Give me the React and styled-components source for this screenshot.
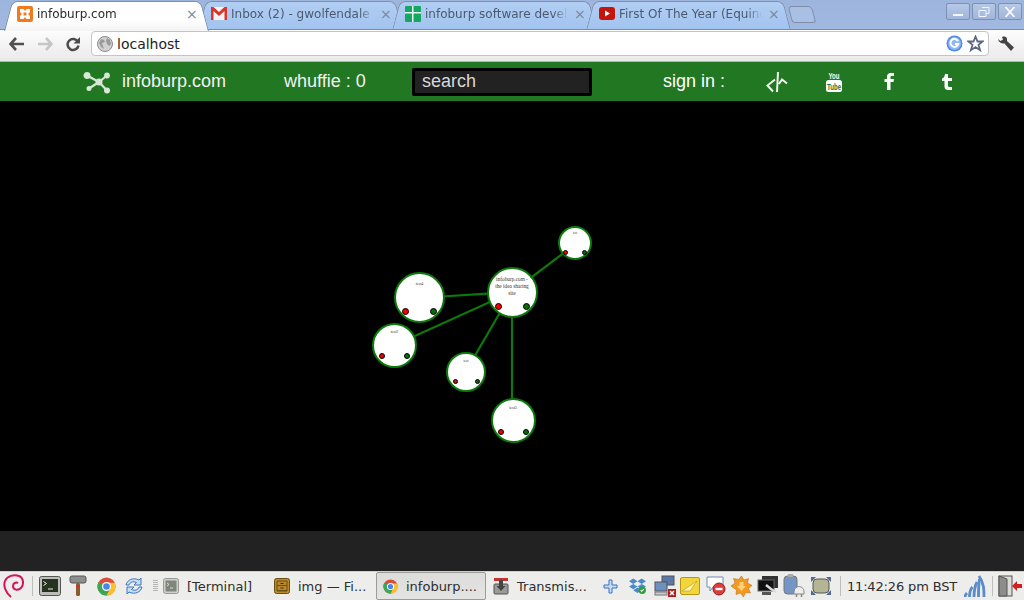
import React from 'react';
import styled, { createGlobalStyle } from 'styled-components';

const GlobalStyle = createGlobalStyle`
  html, body {
    margin: 0;
    padding: 0;
    background: #000;
  }
  body {
    width: 1024px;
    height: 600px;
    overflow: hidden;
    font-family: "DejaVu Sans", sans-serif;
  }
`;

const nodes = [
  { id: 'main', x: 512, y: 191, r: 25.5, size: 5.3, top: 7, dx: 14, dy: 14, dot: 3.5, lines: ['infoburp.com -', 'the idea sharing', 'site'] },
  { id: 'n1', x: 575, y: 142, r: 17, size: 3, top: 2, dx: 9.5, dy: 9, dot: 2.5, lines: ['test'] },
  { id: 'n2', x: 419.5, y: 196.5, r: 25.5, size: 4, top: 6, dx: 14, dy: 14, dot: 3.5, lines: ['test4'] },
  { id: 'n3', x: 394.5, y: 244, r: 22.5, size: 4, top: 3, dx: 12.5, dy: 11, dot: 3, lines: ['test2'] },
  { id: 'n4', x: 466, y: 270.5, r: 20, size: 3.5, top: 4, dx: 11, dy: 10, dot: 2.5, lines: ['test'] },
  { id: 'n5', x: 513, y: 319, r: 22.5, size: 4, top: 4, dx: 12.5, dy: 11.5, dot: 3, lines: ['test3'] },
];

const edges = [
  [512, 191, 565, 151],
  [512, 191, 419, 197],
  [512, 191, 395, 244],
  [512, 191, 466, 270],
  [512, 191, 512, 319],
];

const Screen = styled.div`
  width: 1024px;
  height: 600px;
  display: flex;
  flex-direction: column;
  overflow: hidden;
`;

const TabStrip = styled.div`
  height: 30px;
  box-sizing: border-box;
  padding: 1px 2px 0 8px;
  display: flex;
  align-items: stretch;
  background: linear-gradient(#9db5dd, #a1b8e0);
  border-bottom: 1px solid #7c8aa4;
`;

const Tab = styled.div`
  position: relative;
  flex: none;
  width: 197px;
  margin-left: ${(p) => (p.$first ? '0' : '-3px')};
  height: ${(p) => (p.$active ? '30px' : '28px')};
  z-index: ${(p) => (p.$active ? 2 : 1)};
  display: flex;
  align-items: center;
  padding: 0 9px ${(p) => (p.$active ? '5px' : '3px')} 9px;
  box-sizing: border-box;
  font-size: 12px;
  color: ${(p) => (p.$active ? '#2a2a2a' : '#4b5a70')};

  &::before,
  &::after {
    content: '';
    position: absolute;
    top: 0;
    bottom: 0;
    width: 55%;
    border: 1px solid #7f8fa9;
    border-bottom: 0;
    background: ${(p) => (p.$active ? 'linear-gradient(#ffffff 60%, #f4f4f4)' : 'linear-gradient(#b1cdf2, #a3c4f0)')};
    z-index: -1;
  }
  &::before {
    left: 0;
    border-right: 0;
    border-radius: 6px 0 0 0;
    transform: skewX(-15deg);
  }
  &::after {
    right: 0;
    border-left: 0;
    border-radius: 0 6px 0 0;
    transform: skewX(15deg);
  }
`;

const TabTitle = styled.span`
  flex: 1;
  min-width: 0;
  margin-left: 4px;
  white-space: nowrap;
  overflow: hidden;
  mask-image: linear-gradient(to right, #000 90%, transparent);
`;

const TabClose = styled.span`
  flex: none;
  margin-left: 6px;
  width: 10px;
  font-size: 14px;
  line-height: 14px;
  text-align: center;
  color: #7d8794;
`;

const NewTab = styled.div`
  flex: none;
  width: 22px;
  height: 15px;
  margin: 5px 0 0 3px;
  background: #a9c0e4;
  border: 1px solid #7f8fa9;
  border-radius: 4px 4px 3px 3px;
  transform: skewX(15deg);
`;

const WindowControls = styled.div`
  margin-left: auto;
  display: flex;
  gap: 2px;
  height: 17px;
  margin-top: 2px;
`;

const WindowButton = styled.div`
  width: 24px;
  height: 17px;
  box-sizing: border-box;
  border: 1px solid #7b90b4;
  border-radius: 2px;
  background: linear-gradient(#b6c8e6, #a0b5d9);
  display: flex;
  align-items: center;
  justify-content: center;
`;

const Toolbar = styled.div`
  height: 32px;
  box-sizing: border-box;
  padding-top: 1px;
  display: flex;
  align-items: flex-start;
  background: linear-gradient(#fdfdfd, #e9e9e9);
  border-bottom: 1px solid #b5b5b5;
`;

const NavButton = styled.div`
  width: 28px;
  height: 26px;
  display: flex;
  align-items: center;
  justify-content: center;
  flex: none;
  margin-left: ${(p) => p.$left || 0}px;
`;

const Omnibox = styled.div`
  width: 898px;
  height: 25px;
  margin-left: 4px;
  box-sizing: border-box;
  background: #fff;
  border: 1px solid #c4c4c4;
  border-radius: 4px;
  display: flex;
  align-items: center;
  padding: 0 4px 0 5px;
  gap: 4px;
  font-size: 14px;
  color: #1e1e1e;
`;

const Address = styled.span`
  flex: 1;
`;

const NavBar = styled.nav`
  height: 39px;
  display: grid;
  grid-template-columns: 122px 162px 128px 251px 103px 59px 58px 57px 1fr;
  align-items: center;
  background: #227722;
  font-family: "Liberation Sans", Arial, sans-serif;
  font-size: 18px;
  color: #f2f2f2;
`;

const Brand = styled.div`
  display: flex;
  justify-content: flex-end;
  padding-right: 11px;
`;

const SearchBox = styled.div`
  width: 180px;
  height: 28px;
  box-sizing: border-box;
  background: #222;
  border: 3px solid #000;
  border-radius: 2px;
  padding-left: 7px;
  line-height: 21px;
  color: #d8d8d8;
`;

const SignIn = styled.span`
  color: #fff;
`;

const Social = styled.div`
  display: flex;
  justify-content: flex-start;
`;

const Stage = styled.main`
  position: relative;
  height: 430px;
  background: #000;
`;

const Wires = styled.svg`
  position: absolute;
  inset: 0;
`;

const Node = styled.div`
  position: absolute;
  left: ${(p) => p.$x - p.$r}px;
  top: ${(p) => p.$y - p.$r}px;
  width: ${(p) => p.$r * 2}px;
  height: ${(p) => p.$r * 2}px;
  box-sizing: border-box;
  border: 2.5px solid #0b7a0b;
  border-radius: 50%;
  background: #fff;
  padding-top: ${(p) => p.$top}px;
  text-align: center;
  font-family: "Liberation Serif", serif;
  font-size: ${(p) => p.$size}px;
  line-height: 7px;
  color: #333;
`;

const Socket = styled.span`
  position: absolute;
  left: calc(50% + ${(p) => p.$dx}px);
  top: calc(50% + ${(p) => p.$dy}px);
  width: ${(p) => p.$d * 2}px;
  height: ${(p) => p.$d * 2}px;
  margin: ${(p) => -p.$d}px 0 0 ${(p) => -p.$d}px;
  box-sizing: border-box;
  border: 1px solid #000;
  border-radius: 50%;
  background: ${(p) => p.$color};
`;

const Footer = styled.div`
  height: 40px;
  background: #222;
`;

const Taskbar = styled.footer`
  height: 29px;
  box-sizing: border-box;
  display: flex;
  align-items: center;
  background: #ededeb;
  border-top: 1px solid #cfcfcd;
  font-size: 13px;
  color: #2e2e2e;
`;

const Slot = styled.div`
  flex: none;
  width: ${(p) => p.$w}px;
  display: flex;
  align-items: center;
  justify-content: center;
`;

const Divider = styled.div`
  flex: none;
  width: 1px;
  height: 20px;
  background: #bdbdbb;
  margin: 0 ${(p) => p.$gap || 0}px;
`;

const Grip = styled.div`
  flex: none;
  width: 5px;
  height: 12px;
  margin: 0 5px 0 3px;
  background: repeating-linear-gradient(#b5b5b3 0 1px, transparent 1px 2px);
`;

const Task = styled.div`
  flex: none;
  box-sizing: border-box;
  width: ${(p) => p.$w}px;
  height: 28px;
  display: flex;
  align-items: center;
  gap: 8px;
  padding-left: ${(p) => p.$pad}px;
  white-space: nowrap;
  ${(p) => p.$active && `
    background: linear-gradient(#dcdcda, #e4e4e2);
    border: 1px solid #9b9b99;
    border-radius: 2px;
  `}
`;

const Clock = styled.div`
  flex: none;
  width: 112px;
  text-align: center;
  white-space: nowrap;
  letter-spacing: -0.15px;
`;

const LogoIcon = () => (
  <svg width="28" height="24" viewBox="0 0 28 24">
    <g stroke="#d8e8d6" strokeWidth="2.2" fill="#d8e8d6">
      <line x1="4" y1="5.5" x2="16" y2="12" />
      <line x1="24" y1="5.5" x2="16" y2="12" />
      <line x1="6" y1="18.500" x2="16" y2="12" />
      <line x1="24" y1="20.500" x2="16" y2="12" />
      <circle cx="4" cy="5.500" r="2.400" />
      <circle cx="24" cy="5.500" r="1.800" />
      <circle cx="6" cy="18.500" r="1.400" />
      <circle cx="24" cy="20.500" r="1.900" />
      <circle cx="16" cy="12" r="2.400" />
    </g>
  </svg>
);

const XamppIcon = () => (
  <svg width="16" height="16" viewBox="0 0 16 16">
    <rect width="16" height="16" rx="2" fill="#f07a20" />
    <path d="M3 3h3.500l1.500 2 1.500-2H13v3l-2 2 2 2v3H9.500L8 11l-1.500 2H3v-3l2-2-2-2z" fill="#fff" />
    <rect x="6.500" y="6.500" width="3" height="3" fill="#f07a20" />
  </svg>
);

const GmailIcon = () => (
  <svg width="16" height="13" viewBox="0 0 16 13">
    <rect width="16" height="13" fill="#f4f4f4" />
    <path d="M0 0h2.500L8 5l5.500-5H16v13h-2.500V4L8 9 2.500 4v9H0z" fill="#d9352b" />
  </svg>
);

const SheetIcon = () => (
  <svg width="16" height="16" viewBox="0 0 16 16">
    <rect width="16" height="16" rx="1" fill="#16a765" />
    <path d="M7 0h1.500v16H7zM0 6h16v1.500H0z" fill="#e8f5ee" />
  </svg>
);

const YoutubeIcon = () => (
  <svg width="16" height="13" viewBox="0 0 16 13">
    <rect width="16" height="13" rx="3" fill="#c4140e" />
    <path d="M6 3.500l5 3-5 3z" fill="#fff" />
  </svg>
);

const BackIcon = () => (
  <svg width="16" height="14" viewBox="0 0 16 14">
    <path d="M7 1L1.500 7 7 13M2 7h13" fill="none" stroke="#505050" strokeWidth="2.600" />
  </svg>
);

const ForwardIcon = () => (
  <svg width="16" height="14" viewBox="0 0 16 14">
    <path d="M9 1l5.500 6L9 13M14 7H1" fill="none" stroke="#c6c6c6" strokeWidth="2.600" />
  </svg>
);

const ReloadIcon = () => (
  <svg width="16" height="16" viewBox="0 0 16 16">
    <path d="M13 6a5.500 5.500 0 1 0 .5 3.500" fill="none" stroke="#4c4c4c" strokeWidth="2.500" />
    <path d="M15 1v6.500H8.500z" fill="#4c4c4c" />
  </svg>
);

const GlobeIcon = () => (
  <svg width="16" height="16" viewBox="0 0 16 16">
    <circle cx="8" cy="8" r="7.500" fill="#d2d2d2" stroke="#8a8a8a" />
    <path d="M4 3l3 1 1 2-3 1 1 3 1 3-3-2-2-4zM10 2l3 2 1 4-2 2-2-2-1-3z" fill="#9a9a9a" />
  </svg>
);

const GoogleIcon = () => (
  <svg width="17" height="17" viewBox="0 0 17 17">
    <circle cx="8.500" cy="8.500" r="8" fill="#4c8be8" />
    <circle cx="8.500" cy="8.500" r="6.500" fill="#8fb8f2" />
    <path d="M12 6a4 4 0 1 0 .3 3H9" fill="none" stroke="#fff" strokeWidth="2" />
  </svg>
);

const StarIcon = () => (
  <svg width="17" height="17" viewBox="0 0 17 17">
    <path d="M8.500 1.500l2 5h5.200l-4.200 3.300 1.600 5.400-4.600-3.100-4.600 3.100 1.600-5.400L1.300 6.500h5.200z" fill="#fff" stroke="#5d6880" strokeWidth="1.800" />
  </svg>
);

const WrenchIcon = () => (
  <svg width="18" height="16" viewBox="0 0 18 16">
    <path d="M1 3L3.500 5 6 3.500 5 1C7 0 9 .5 10 2.500V5L17 11.500 14 15 7.500 7.500C5 8 2 7 1 3z" fill="#444" />
  </svg>
);

const TeeIcon = () => (
  <svg width="24" height="22" viewBox="0 0 24 22">
    <path d="M12 1l-1 20M9 8.500L1.500 14.500 7 20.500M13 13l3-4.500 5 4" fill="none" stroke="#f2f2f2" strokeWidth="2" />
  </svg>
);

const YouTubeLogo = () => (
  <svg width="18" height="22" viewBox="0 0 18 22">
    <text x="9" y="8" textAnchor="middle" fontFamily="Liberation Sans, sans-serif" fontSize="9" fontWeight="700" fill="#fff" textLength="11" lengthAdjust="spacingAndGlyphs">You</text>
    <rect x="1" y="9" width="16" height="12" rx="2.500" fill="#fff" />
    <text x="9" y="18.500" textAnchor="middle" fontFamily="Liberation Sans, sans-serif" fontSize="9" fontWeight="700" fill="#227722" textLength="14" lengthAdjust="spacingAndGlyphs">Tube</text>
  </svg>
);

const FacebookIcon = () => (
  <svg width="14" height="20" viewBox="0 0 14 20">
    <path d="M4 18V10H1.500V7H4V4.500C4 2.500 5.500 1 7.500 1H11v3H8.500C7.800 4 7.500 4.400 7.500 5V7H11l-.5 3h-3v8z" fill="#fff" />
  </svg>
);

const TumblrIcon = () => (
  <svg width="14" height="20" viewBox="0 0 14 20">
    <path d="M5 2h3v4h4v3H8v4.500c0 1 .6 1.500 1.500 1.500H12v3H8C5.800 18 4.500 16.500 4.500 14.500V9H2V6.500C3.800 6 4.800 4.200 5 2z" fill="#fff" />
  </svg>
);

const SwirlIcon = () => (
  <svg width="22" height="24" viewBox="0 0 22 24">
    <path d="M8 23C3 19 0 12 2 7c2-5 9-7 14-5 5 2 5 9 2 12-3 3-8 2-8-2 0-3 3-4 5-3" fill="none" stroke="#d4145a" strokeWidth="2" />
  </svg>
);

const TerminalIcon = () => (
  <svg width="22" height="21" viewBox="0 0 22 21">
    <rect x=".5" y=".5" width="21" height="19" rx="2" fill="#bdbdb8" stroke="#555" />
    <rect x="3" y="3" width="16" height="13" fill="#26331f" />
    <path d="M4.500 5.500l3 2-3 2M9 13h5" fill="none" stroke="#eee" />
  </svg>
);

const HammerIcon = () => (
  <svg width="18" height="22" viewBox="0 0 18 22">
    <rect x="1" y="1" width="16" height="7" rx="2" fill="#8e8e8c" stroke="#555" />
    <rect x="7" y="8" width="4" height="13" rx="1.500" fill="#8c5a2b" />
    <rect x="7" y="10" width="4" height="2" fill="#c33" />
  </svg>
);

const ChromeIcon = ({ size }) => (
  <svg width={size} height={size} viewBox="0 0 20 20">
    <circle cx="10" cy="10" r="9.500" fill="#dd4b39" />
    <path d="M10 10L1.800 5.200A9.500 9.500 0 0 0 10 19.500L14 13z" fill="#3aa757" />
    <path d="M10 6h8.800A9.500 9.500 0 0 1 10 19.500L14 12z" fill="#fbc02d" />
    <circle cx="10" cy="10" r="4.800" fill="#fff" />
    <circle cx="10" cy="10" r="3.500" fill="#4a86e8" />
  </svg>
);

const SyncIcon = () => (
  <svg width="20" height="20" viewBox="0 0 20 20">
    <path d="M2 9C3 4 9 1 15 4l2-2v7h-7l2.500-2.500C9 5 6 6 5 9z" fill="#c9dcf2" stroke="#3f78bd" />
    <path d="M18 11c-1 5-7 8-13 5l-2 2v-7h7l-2.500 2.500C11 15 14 14 15 11z" fill="#c9dcf2" stroke="#3f78bd" />
  </svg>
);

const SmallTerminalIcon = () => (
  <svg width="16" height="16" viewBox="0 0 16 16">
    <rect x=".5" y=".5" width="15" height="15" rx="2" fill="#cfd0cb" stroke="#999" />
    <rect x="2.500" y="2.500" width="11" height="11" fill="#7f867c" />
    <path d="M4 5l2 1.500L4 8M7 10h3" fill="none" stroke="#eee" strokeWidth=".8" />
  </svg>
);

const CabinetIcon = () => (
  <svg width="16" height="16" viewBox="0 0 16 16">
    <rect x=".5" y=".5" width="15" height="15" rx="2" fill="#b98a2e" stroke="#6b4e12" />
    <path d="M3 7.500h10M3 12.500h10M3 3h10v10H3z" fill="none" stroke="#6b4e12" />
    <path d="M6.500 5.500h3M6.500 10h3" stroke="#3f2e0a" />
  </svg>
);

const TransmissionIcon = () => (
  <svg width="16" height="18" viewBox="0 0 16 18">
    <rect x="1" y="1" width="14" height="3" fill="#c8322b" />
    <rect x="1" y="7" width="14" height="10" rx="1" fill="#9a9a98" stroke="#555" />
    <path d="M6 3h4v6h2.500L8 14 3.500 9H6z" fill="#444" />
  </svg>
);

const PlusIcon = () => (
  <svg width="15" height="15" viewBox="0 0 15 15">
    <path d="M6 1h3v5h5v3H9v5H6V9H1V6h5z" fill="#c8dbf5" stroke="#3c72bd" />
  </svg>
);

const DropboxIcon = () => (
  <svg width="18" height="18" viewBox="0 0 17 16">
    <path d="M4 1l4 2.500L4 6 0 3.500zM12 1l4 2.500L12 6 8 3.500zM4 6l4 2.500L4 11 0 8.500zM12 6l4 2.500L12 11 8 8.500zM4 12l4-2.500 4 2.500-4 2.500z" fill="#4a8ac8" />
    <circle cx="12.500" cy="12" r="3.500" fill="#2f9e3f" />
    <path d="M11 12l1 1 2-2" fill="none" stroke="#fff" />
  </svg>
);

const NetworkIcon = () => (
  <svg width="22" height="22" viewBox="0 0 22 22">
    <rect x="8" y="1" width="12" height="9" fill="#5a78a8" stroke="#555" />
    <rect x="1" y="7" width="12" height="9" fill="#6f8fbe" stroke="#555" />
    <rect x="1" y="17" width="12" height="3" fill="#ccc" stroke="#777" />
    <rect x="14" y="14" width="8" height="8" fill="#b01c1c" />
    <path d="M16 16l4 4M20 16l-4 4" stroke="#fff" strokeWidth="1.500" />
  </svg>
);

const NoteIcon = () => (
  <svg width="20" height="18" viewBox="0 0 20 18">
    <rect x=".5" y=".5" width="19" height="17" rx="1.500" fill="#f2d43c" stroke="#b8960e" />
    <path d="M2 14L17 4 10 14z" fill="#fff7b0" stroke="#b8960e" strokeWidth=".6" />
  </svg>
);

const ChatIcon = () => (
  <svg width="20" height="20" viewBox="0 0 20 20">
    <path d="M1 1h16v10H7l-3 4v-4H1z" fill="#fff" stroke="#6c8ab5" />
    <circle cx="13" cy="13" r="6" fill="#dd3c3c" stroke="#8f1f1f" />
    <rect x="9.500" y="11.800" width="7" height="2.400" fill="#fff" />
  </svg>
);

const BurstIcon = () => (
  <svg width="21" height="21" viewBox="0 0 21 21">
    <path d="M10.500 0l2.500 4 4.500-1.500-1 4.500 4.500 2.500-3.500 3 2 4.500-5-.5-2 4.500-3-4-4.500 1.500.5-4.500L0 10l4-3-1.500-4.500 5 1z" fill="#f19a1f" stroke="#b8620a" strokeWidth=".5" />
    <path d="M8.500 6h4v4h2.500l-4.500 5L6 10h2.500z" fill="#fbd27a" />
  </svg>
);

const MonitorIcon = () => (
  <svg width="22" height="20" viewBox="0 0 22 20">
    <rect x="5" y="0" width="16" height="12" fill="#333" />
    <rect x="1" y="4" width="16" height="11" fill="#111" stroke="#666" />
    <rect x="5" y="16" width="9" height="3" fill="#555" />
    <path d="M9 9l5 4 5 3" stroke="#ddd" strokeWidth="2.500" fill="none" />
  </svg>
);

const BatteryIcon = () => (
  <svg width="22" height="24" viewBox="0 0 22 24">
    <rect x="1" y="2" width="13" height="18" rx="3.500" fill="#7396c6" stroke="#777" />
    <rect x="5" y="0" width="5" height="3" fill="#aaa" />
    <path d="M14 13a5 5 0 0 1 7 5v2H11v-2a5 5 0 0 1 3-5z" fill="#eee" stroke="#888" />
    <path d="M13.500 20v3M18.500 20v3" stroke="#888" strokeWidth="1.500" />
  </svg>
);

const ScreenIcon = () => (
  <svg width="20" height="18" viewBox="0 0 20 18">
    <rect x="2" y="2" width="16" height="14" rx="4" fill="#b5b595" stroke="#555" />
    <path d="M0 0h5L0 5zM20 0v5l-5-5zM0 18v-5l5 5zM20 18h-5l5-5z" fill="#4b6a8f" />
  </svg>
);

const WifiIcon = () => (
  <svg width="22" height="24" viewBox="0 0 22 24">
    <g fill="none" stroke="#5a8ccb" strokeWidth="2.800">
      <path d="M1 23c0-2 1-3 2-4" />
      <path d="M5.500 23c0-5 1-8 3-10" />
      <path d="M10 23c0-7 1-11 3-15" />
      <path d="M14.500 23c0-8 0-13 1-18" />
      <path d="M20 23c0-7 0-14-5-21" />
    </g>
  </svg>
);

const LogoutIcon = () => (
  <svg width="24" height="22" viewBox="0 0 24 22">
    <rect x="1" y="1" width="13" height="20" fill="#dcdcda" stroke="#555" />
    <path d="M1 1l8 3v17H1z" fill="#8d8d8b" stroke="#555" />
    <path d="M24 9h-5V6l-5 5 5 5v-3h5z" fill="#d11f1f" />
  </svg>
);

const tabs = [
  { title: 'infoburp.com', icon: <XamppIcon />, active: true },
  { title: 'Inbox (2) - gwolfendale', icon: <GmailIcon /> },
  { title: 'infoburp software devel', icon: <SheetIcon /> },
  { title: 'First Of The Year (Equinc', icon: <YoutubeIcon /> },
];

const App = () => {
  return (
    <Screen>
      <GlobalStyle />
      <TabStrip>
        {tabs.map((tab, i) => (
          <Tab key={tab.title} $active={tab.active} $first={i === 0}>
            {tab.icon}
            <TabTitle>{tab.title}</TabTitle>
            <TabClose>×</TabClose>
          </Tab>
        ))}
        <NewTab />
        <WindowControls>
          <WindowButton>
            <svg width="12" height="10" viewBox="0 0 12 10"><rect x="1" y="7" width="10" height="2" fill="#f2f5fa" /></svg>
          </WindowButton>
          <WindowButton>
            <svg width="12" height="10" viewBox="0 0 12 10"><path d="M4 .5h7v6H8M1 3.500h7v6H1z" fill="none" stroke="#f2f5fa" /></svg>
          </WindowButton>
          <WindowButton>
            <svg width="12" height="10" viewBox="0 0 12 10"><path d="M1.500 0l9 10M10.500 0l-9 10" stroke="#f7f9fc" strokeWidth="1.800" /></svg>
          </WindowButton>
        </WindowControls>
      </TabStrip>
      <Toolbar>
        <NavButton $left={3}><BackIcon /></NavButton>
        <NavButton><ForwardIcon /></NavButton>
        <NavButton><ReloadIcon /></NavButton>
        <Omnibox>
          <GlobeIcon />
          <Address>localhost</Address>
          <GoogleIcon />
          <StarIcon />
        </Omnibox>
        <NavButton $left={3}><WrenchIcon /></NavButton>
      </Toolbar>
      <NavBar>
        <Brand><LogoIcon /></Brand>
        <span>infoburp.com</span>
        <span>whuffie : 0</span>
        <SearchBox>search</SearchBox>
        <SignIn>sign in :</SignIn>
        <Social><TeeIcon /></Social>
        <Social><YouTubeLogo /></Social>
        <Social><FacebookIcon /></Social>
        <Social><TumblrIcon /></Social>
      </NavBar>
      <Stage>
        <Wires width="1024" height="430">
          {edges.map(([x1, y1, x2, y2]) => (
            <line key={`${x2}-${y2}`} x1={x1} y1={y1} x2={x2} y2={y2} stroke="#0b7a0b" strokeWidth="2.200" />
          ))}
        </Wires>
        {nodes.map((n) => (
          <Node key={n.id} $x={n.x} $y={n.y} $r={n.r} $size={n.size} $top={n.top}>
            {n.lines.map((line) => (
              <div key={line}>{line}</div>
            ))}
            <Socket $dx={-n.dx} $dy={n.dy} $d={n.dot} $color="#f00000" />
            <Socket $dx={n.dx} $dy={n.dy} $d={n.dot} $color="#0a6a0a" />
          </Node>
        ))}
      </Stage>
      <Footer />
      <Taskbar>
        <Slot $w={27}><SwirlIcon /></Slot>
        <Divider $gap={5} />
        <Slot $w={24}><TerminalIcon /></Slot>
        <Slot $w={32}><HammerIcon /></Slot>
        <Slot $w={24}><ChromeIcon size={19} /></Slot>
        <Slot $w={32}><SyncIcon /></Slot>
        <Grip />
        <Task $w={111} $pad={0}><SmallTerminalIcon />[Terminal]</Task>
        <Task $w={102} $pad={0}><CabinetIcon />img — Fi...</Task>
        <Task $w={110} $pad={6} $active><ChromeIcon size={15} />infoburp....</Task>
        <Task $w={110} $pad={7}><TransmissionIcon />Transmis...</Task>
        <Slot $w={28}><PlusIcon /></Slot>
        <Slot $w={28}><DropboxIcon /></Slot>
        <Slot $w={25}><NetworkIcon /></Slot>
        <Slot $w={26}><NoteIcon /></Slot>
        <Slot $w={26}><ChatIcon /></Slot>
        <Slot $w={25}><BurstIcon /></Slot>
        <Slot $w={27}><MonitorIcon /></Slot>
        <Slot $w={26}><BatteryIcon /></Slot>
        <Slot $w={28}><ScreenIcon /></Slot>
        <Divider $gap={5} />
        <Clock>11:42:26 pm BST</Clock>
        <Slot $w={34}><WifiIcon /></Slot>
        <Divider />
        <Slot $w={34}><LogoutIcon /></Slot>
      </Taskbar>
    </Screen>
  );
};

export default App;
